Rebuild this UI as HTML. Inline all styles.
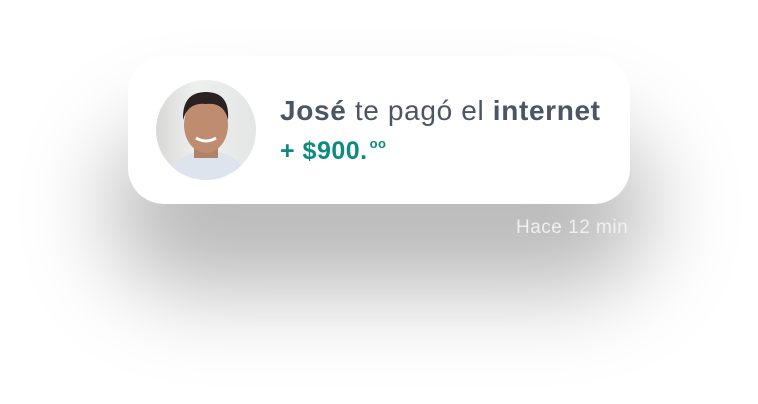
<!DOCTYPE html>
<html><head><meta charset="utf-8"><style>
html,body{margin:0;padding:0;width:758px;height:404px;background:#fff;overflow:hidden;font-family:"Liberation Sans",sans-serif}
.sh{position:absolute;left:110px;top:125px;width:540px;height:165px;border-radius:80px;background:rgba(0,0,0,.27);filter:blur(45px)}
.card{position:absolute;left:128px;top:56px;width:502px;height:148px;border-radius:36px;background:#fff}
.av{position:absolute;left:156px;top:80px;width:100px;height:100px;border-radius:50%;overflow:hidden;background:linear-gradient(90deg,#d8d8d6,#eef0f0 40%,#e4e6e6)}
.t1{position:absolute;left:280px;top:95px;font-size:28px;color:#4b5565;white-space:nowrap;letter-spacing:0.65px}
.t2{position:absolute;left:280px;top:136px;font-size:25px;color:#0f8a7e;font-weight:bold;white-space:nowrap;letter-spacing:0.5px}
.t2 sup{font-size:13px;vertical-align:11px;margin-left:2px}
.tm{position:absolute;left:516px;top:217px;font-size:19px;color:#f0f0f0;letter-spacing:0.5px}
</style></head><body>
<div class="sh"></div>
<div class="card"></div>
<div class="av"><svg width="100" height="100" viewBox="0 0 100 100">
<path d="M10 100 Q15 78 40 72 L62 72 Q88 78 92 100Z" fill="#dde4ee"/>
<path d="M38 60 L38 78 L62 78 L62 60Z" fill="#b0826a"/>
<ellipse cx="50" cy="45" rx="22" ry="28" fill="#c08c70"/>
<path d="M27 40 Q26 12 50 12 Q74 12 72 40 Q68 22 50 24 Q32 22 27 40Z" fill="#2a2220"/>
<path d="M40 58 Q50 64 60 58" stroke="#fff" stroke-width="3" fill="none"/>
</svg></div>
<div class="t1"><b>José</b> te pagó el <b>internet</b></div>
<div class="t2">+ $900.<sup>oo</sup></div>
<div class="tm">Hace 12 min</div>
</body></html>
